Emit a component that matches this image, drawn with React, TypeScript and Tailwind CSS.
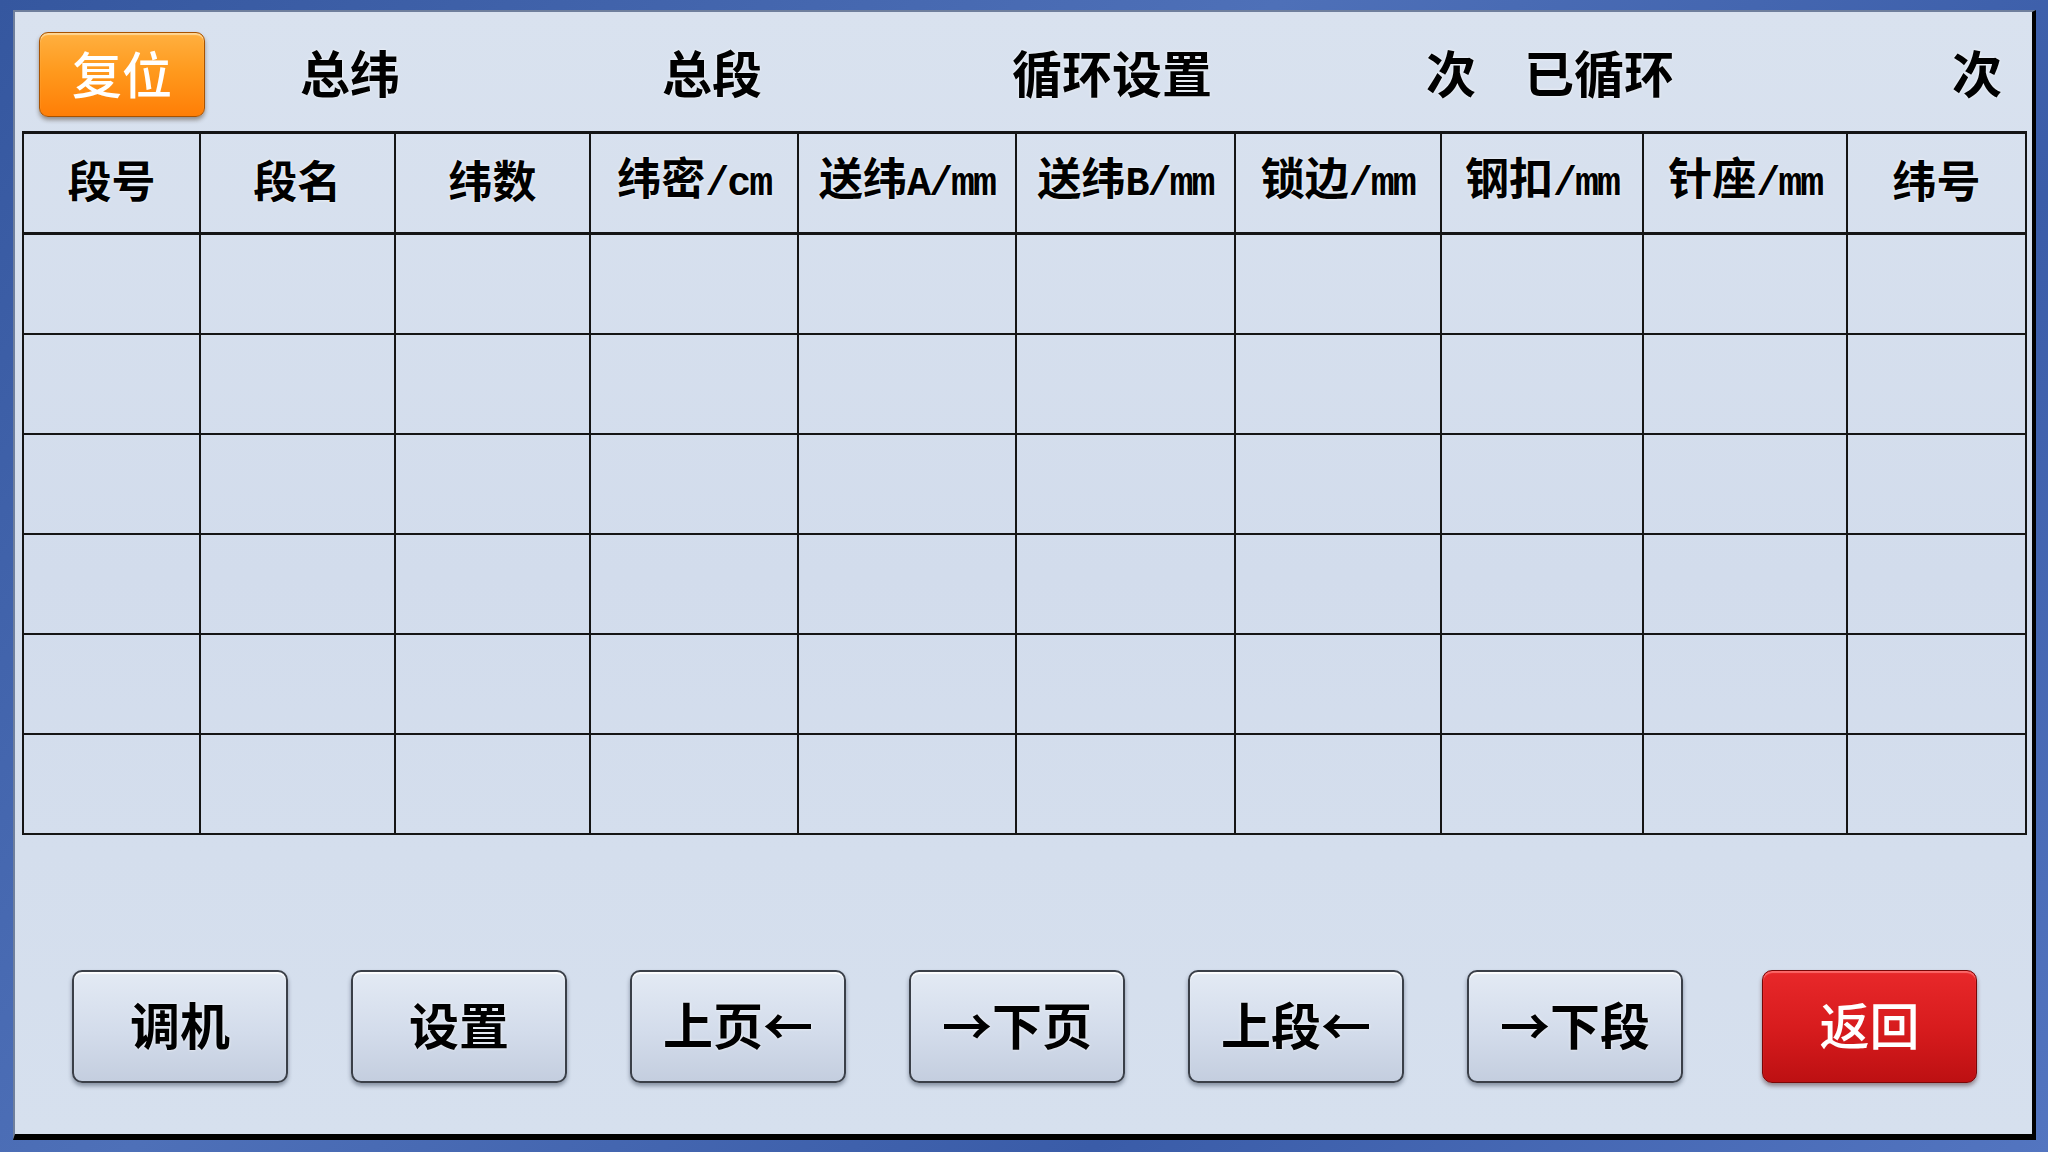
import { type FC } from 'react'

// column widths measured from the reference (px)
const columns: { cn: string; unit?: string; w: string }[] = [
  { cn: '段号', w: 'w-[177px]' },
  { cn: '段名', w: 'w-[195px]' },
  { cn: '纬数', w: 'w-[196px]' },
  { cn: '纬密', unit: '/cm', w: 'w-[208px]' },
  { cn: '送纬', unit: 'A/mm', w: 'w-[218px]' },
  { cn: '送纬', unit: 'B/mm', w: 'w-[219px]' },
  { cn: '锁边', unit: '/mm', w: 'w-[206px]' },
  { cn: '钢扣', unit: '/mm', w: 'w-[203px]' },
  { cn: '针座', unit: '/mm', w: 'w-[204px]' },
  { cn: '纬号', w: 'w-[179px]' },
]

const rows = [0, 1, 2, 3, 4, 5]

const cjk = "font-['Noto_Sans_CJK_SC',sans-serif]"
const glow = '[text-shadow:0_0_3px_rgba(255,255,255,0.9)]'
const label = `pb-[8px] text-[50px] font-bold text-black ${glow}`

const NavButton: FC<{ label: string; className?: string }> = ({ label, className = '' }) => (
  <button
    className={`w-[216px] h-[113px] pb-[8px] rounded-[10px] border-2 border-[#3a3f48] bg-[linear-gradient(180deg,#e3eaf4_0%,#d3dceb_55%,#c4cedf_100%)] shadow-[0_3px_4px_rgba(40,50,70,0.45),inset_0_2px_1px_rgba(255,255,255,0.9)] flex items-center justify-center text-[50px] leading-none font-bold text-black ${glow} ${className}`}
  >
    {label}
  </button>
)

const App: FC = () => {
  return (
    <div className={`w-[2048px] h-[1152px] overflow-hidden bg-[linear-gradient(135deg,#35579f_0%,#4e70b8_40%,#3a5ca8_70%,#5375c0_100%)] pl-[13px] pt-[10px] pr-[12px] pb-[12px] ${cjk}`}>
      <div className="w-full h-full flex flex-col bg-[#d5dfed] bg-[linear-gradient(180deg,#d9e2ef_0%,#d2dcec_50%,#d6e0ee_100%)] border-t-2 border-l-2 border-[#6f7f9c] border-r-4 border-r-black border-b-[6px] border-b-black">
        {/* Header */}
        <div className="h-[119px] pt-[6px] flex items-center shrink-0 leading-none">
          <button className="ml-[24px] w-[166px] h-[85px] pb-[6px] rounded-[9px] border border-[#a85200] bg-[linear-gradient(180deg,#ffb040_0%,#ff9a1e_45%,#ff7e06_100%)] shadow-[0_3px_4px_rgba(60,40,20,0.45),inset_0_2px_1px_rgba(255,220,160,0.9)] flex items-center justify-center text-[50px] leading-none font-medium text-white">
            复位
          </button>
          <span className={`ml-[95px] ${label}`}>总纬</span>
          <span className={`ml-[262px] ${label}`}>总段</span>
          <span className={`ml-[250px] ${label}`}>循环设置</span>
          <span className={`ml-[214px] ${label}`}>次</span>
          <span className={`ml-[48px] ${label}`}>已循环</span>
          <span className={`ml-[278px] ${label}`}>次</span>
        </div>

        {/* Table */}
        <div className="ml-[7px] w-[2005px] border-t-[3px] border-l-2 border-[#151515] shrink-0">
          <div className="flex h-[101px]">
            {columns.map((c, i) => (
              <div
                key={i}
                className={`${c.w} h-full pb-[8px] border-r-2 border-b-[3px] border-[#151515] flex items-center justify-center text-[44px] leading-none font-bold text-black ${glow}`}
              >
                <span className="whitespace-nowrap">
                  {c.cn}
                  {c.unit && (
                    <span className="font-['Liberation_Mono',monospace] text-[40px] font-bold tracking-[-2px]">{c.unit}</span>
                  )}
                </span>
              </div>
            ))}
          </div>
          {rows.map(r => (
            <div key={r} className="flex h-[100px]">
              {columns.map((c, i) => (
                <div key={i} className={`${c.w} h-full border-r-2 border-b-2 border-[#151515]`} />
              ))}
            </div>
          ))}
        </div>

        {/* Bottom buttons */}
        <div className="mt-[135px] pl-[57px] flex items-center gap-[63px] shrink-0">
          <NavButton label="调机" />
          <NavButton label="设置" />
          <NavButton label="上页←" />
          <NavButton label="→下页" />
          <NavButton label="上段←" />
          <NavButton label="→下段" />
          <button className="ml-[16px] w-[215px] h-[113px] pb-[8px] rounded-[10px] border border-[#7a0606] bg-[linear-gradient(180deg,#e8282a_0%,#d81c1e_50%,#bd1012_100%)] shadow-[0_3px_4px_rgba(60,20,20,0.45),inset_0_2px_1px_rgba(255,120,120,0.8)] flex items-center justify-center text-[50px] leading-none font-medium text-white">
            返回
          </button>
        </div>
      </div>
    </div>
  )
}

export default App
